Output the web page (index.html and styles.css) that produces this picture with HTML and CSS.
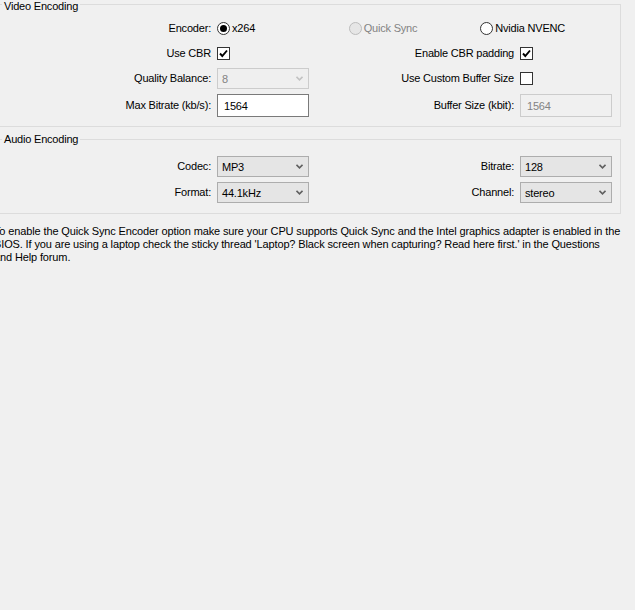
FILE: index.html
```html
<!DOCTYPE html>
<html>
<head>
<meta charset="utf-8">
<link rel="stylesheet" href="styles.css">
</head>
<body>
<div class="page">
  <section class="group video">
    <span class="group-title video-title">Video Encoding</span>
    <div class="grid video-grid">
      <span class="label">Encoder:</span>
      <div class="radios">
        <span class="radio-item"><span class="radio checked"></span>x264</span>
        <span class="radio-item disabled"><span class="radio"></span>Quick Sync</span>
        <span class="radio-item"><span class="radio"></span>Nvidia NVENC</span>
      </div>

      <span class="label">Use CBR</span>
      <span class="cell"><span class="checkbox"><svg viewBox="0 0 11 11" width="11" height="11"><path d="M2 5.5 L4.3 8 L9 2.5" fill="none" stroke="#000" stroke-width="1.9"/></svg></span></span>
      <span class="label">Enable CBR padding</span>
      <span class="cell"><span class="checkbox"><svg viewBox="0 0 11 11" width="11" height="11"><path d="M2 5.5 L4.3 8 L9 2.5" fill="none" stroke="#000" stroke-width="1.9"/></svg></span></span>

      <span class="label">Quality Balance:</span>
      <span class="combo disabled"><span>8</span><svg class="arrow" viewBox="0 0 7 5" width="7" height="5"><path d="M0.5 0.8 L3.5 3.8 L6.5 0.8" fill="none" stroke="#c2c2c2" stroke-width="1.6"/></svg></span>
      <span class="label">Use Custom Buffer Size</span>
      <span class="cell"><span class="checkbox"></span></span>

      <span class="label">Max Bitrate (kb/s):</span>
      <span class="textbox">1564</span>
      <span class="label">Buffer Size (kbit):</span>
      <span class="textbox disabled">1564</span>
    </div>
  </section>

  <section class="group audio">
    <span class="group-title audio-title">Audio Encoding</span>
    <div class="grid audio-grid">
      <span class="label">Codec:</span>
      <span class="combo"><span>MP3</span><svg class="arrow" viewBox="0 0 7 5" width="7" height="5"><path d="M0.5 0.8 L3.5 3.8 L6.5 0.8" fill="none" stroke="#606060" stroke-width="1.6"/></svg></span>
      <span class="label">Bitrate:</span>
      <span class="combo"><span>128</span><svg class="arrow" viewBox="0 0 7 5" width="7" height="5"><path d="M0.5 0.8 L3.5 3.8 L6.5 0.8" fill="none" stroke="#606060" stroke-width="1.6"/></svg></span>

      <span class="label">Format:</span>
      <span class="combo"><span>44.1kHz</span><svg class="arrow" viewBox="0 0 7 5" width="7" height="5"><path d="M0.5 0.8 L3.5 3.8 L6.5 0.8" fill="none" stroke="#606060" stroke-width="1.6"/></svg></span>
      <span class="label">Channel:</span>
      <span class="combo"><span>stereo</span><svg class="arrow" viewBox="0 0 7 5" width="7" height="5"><path d="M0.5 0.8 L3.5 3.8 L6.5 0.8" fill="none" stroke="#606060" stroke-width="1.6"/></svg></span>
    </div>
  </section>

  <p class="note">To enable the Quick Sync Encoder option make sure your CPU supports Quick Sync and the Intel graphics adapter is enabled in the<br>BIOS. If you are using a laptop check the sticky thread 'Laptop? Black screen when capturing? Read here first.' in the Questions<br>and Help forum.</p>
</div>
</body>
</html>
```
FILE: styles.css
```css
html, body {
  margin: 0;
  padding: 0;
}
body {
  background: #f0f0f0;
  font-family: "Liberation Sans", Arial, sans-serif;
  font-size: 11px;
  letter-spacing: -0.2px;
  color: #000;
  overflow: hidden;
  width: 635px;
  height: 610px;
}
.page {
  margin-left: -10px;
  padding-top: 4px;
}
.group {
  position: relative;
  border: 1px solid #dcdcdc;
  width: 621px;
}
.video {
  padding: 13px 8px 9px 0;
}
.audio {
  margin-top: 12px;
  padding: 16px 8px 10px 0;
}
.group-title {
  position: absolute;
  left: 11px;
  padding: 0 2px;
  background: #f0f0f0;
  line-height: 13px;
  white-space: nowrap;
}
.video-title { top: -5px; }
.audio-title { top: -7px; }

.grid {
  display: grid;
  grid-template-columns: 220px 92px 199px 92px;
  column-gap: 6px;
  row-gap: 5px;
  align-items: center;
}
.video-grid { grid-template-rows: 20px 20px 21px 23px; }
.audio-grid { grid-template-rows: 21px 21px; }

.label {
  text-align: right;
  white-space: nowrap;
  line-height: 13px;
}
.cell {
  display: flex;
  align-items: center;
}
.radios {
  grid-column: 2 / 5;
  display: grid;
  grid-template-columns: repeat(3, 1fr);
  align-items: center;
}
.radio-item {
  display: flex;
  align-items: center;
  gap: 2px;
  white-space: nowrap;
}
.radio {
  box-sizing: border-box;
  width: 13px;
  height: 13px;
  border: 1px solid #333;
  border-radius: 50%;
  background: #fff;
  display: flex;
  align-items: center;
  justify-content: center;
}
.radio.checked::after {
  content: "";
  width: 7px;
  height: 7px;
  border-radius: 50%;
  background: #000;
}
.radio-item.disabled { color: #838383; }
.radio-item.disabled .radio {
  border-color: #bcbcbc;
  background: #e6e6e6;
}
.checkbox {
  box-sizing: border-box;
  width: 13px;
  height: 13px;
  border: 1px solid #333;
  background: #fff;
  display: flex;
  align-items: center;
  justify-content: center;
}
.checkbox svg { display: block; }

.combo {
  box-sizing: border-box;
  height: 21px;
  border: 1px solid #adadad;
  background: #e5e5e5;
  display: flex;
  align-items: center;
  justify-content: space-between;
  padding: 0 5px 0 4px;
  white-space: nowrap;
}
.combo.disabled {
  border-color: #cccccc;
  background: #efefef;
  color: #838383;
}
.arrow { display: block; }

.textbox {
  box-sizing: border-box;
  height: 23px;
  border: 1px solid #7a7a7a;
  background: #fff;
  display: flex;
  align-items: center;
  padding-left: 6px;
}
.textbox.disabled {
  border-color: #cccccc;
  background: #f0f0f0;
  color: #838383;
}

.note {
  margin: 11px 0 0 4px;
  line-height: 13px;
  letter-spacing: -0.13px;
  white-space: nowrap;
}
```
